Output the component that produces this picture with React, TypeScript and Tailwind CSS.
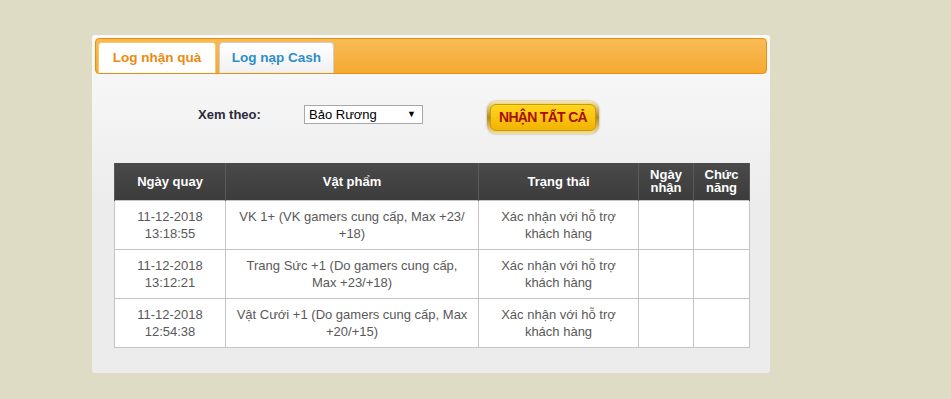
import React from 'react';

interface LogRow {
  date: string;
  time: string;
  item: string;
  status: string;
}

const rows: LogRow[] = [
  {
    date: '11-12-2018',
    time: '13:18:55',
    item: 'VK 1+ (VK gamers cung cấp, Max +23/ +18)',
    status: 'Xác nhận với hỗ trợ khách hàng',
  },
  {
    date: '11-12-2018',
    time: '13:12:21',
    item: 'Trang Sức +1 (Do gamers cung cấp, Max +23/+18)',
    status: 'Xác nhận với hỗ trợ khách hàng',
  },
  {
    date: '11-12-2018',
    time: '12:54:38',
    item: 'Vật Cưới +1 (Do gamers cung cấp, Max +20/+15)',
    status: 'Xác nhận với hỗ trợ khách hàng',
  },
];

const font = { fontFamily: '"Liberation Sans", Arial, sans-serif' };

export default function App() {
  return (
    <div className="min-h-[399px] w-full bg-[#dfdcc5] pt-[35px] pl-[92px]" style={font}>
      <div className="w-[678px] h-[338px] rounded-[3px] bg-gradient-to-b from-[#fafafa] via-[#ececec] to-[#ececec] p-[3px]">
        {/* tab bar */}
        <div className="h-[36px] rounded-[4px] border border-[#e8900c] bg-gradient-to-b from-[#f8bb55] to-[#f5a930] flex items-end pl-[2px] gap-[3px]">
          <div className="w-[118px] h-[31px] rounded-t-[4px] border border-b-0 border-[#fbc872] bg-white flex items-center justify-center text-[13.5px] font-bold text-[#ee8a0e]">
            Log nhận quà
          </div>
          <div className="w-[115px] h-[31px] rounded-t-[4px] border border-b-0 border-[#cfcfcf] bg-gradient-to-b from-white to-[#f0f0f0] flex items-center justify-center text-[13.5px] font-bold text-[#2d8ec8]">
            Log nạp Cash
          </div>
        </div>

        {/* filter row */}
        <div className="flex items-start mt-[27px] pl-[103px] h-[33px]">
          <span className="mt-[4px] text-[13px] font-bold text-[#2b2b3a] w-[68px]">Xem theo:</span>
          <div className="mt-[4px] ml-[38px] w-[119px] h-[19px] border border-[#a8a8a8] bg-white flex items-center justify-between pl-[4px] pr-[6px] text-[13px] text-black">
            <span>Bảo Rương</span>
            <span className="text-[9px]">▼</span>
          </div>
          <button className="ml-[64px] w-[112px] h-[33px] rounded-[9px] p-[3px] bg-gradient-to-b from-[#f6e8a8] via-[#b38a18] to-[#f3e09a] shadow-[0_0_2px_rgba(120,90,0,0.6)]">
            <div className="w-full h-full rounded-[6px] border border-[#c89a10] bg-gradient-to-b from-[#ffd61e] to-[#f2b300] flex items-center justify-center text-[14px] font-bold text-[#a80f0a] tracking-[-0.7px]">
              NHẬN TẤT CẢ
            </div>
          </button>
        </div>

        {/* table */}
        <table className="mt-[29px] ml-[19px] w-[635px] border-collapse table-fixed text-[13px]">
          <colgroup>
            <col className="w-[111px]" />
            <col className="w-[253px]" />
            <col className="w-[160px]" />
            <col className="w-[55px]" />
            <col className="w-[56px]" />
          </colgroup>
          <thead>
            <tr className="h-[37px] bg-gradient-to-b from-[#4a4a4a] to-[#3c3c3c] text-white font-bold text-[13px] leading-[13px]">
              <th className="border-x border-[#5a5a5a] px-1">Ngày quay</th>
              <th className="border-x border-[#5a5a5a] px-1">Vật phẩm</th>
              <th className="border-x border-[#5a5a5a] px-1">Trạng thái</th>
              <th className="border-x border-[#5a5a5a] px-1">Ngày nhận</th>
              <th className="border-x border-[#5a5a5a] px-1">Chức năng</th>
            </tr>
          </thead>
          <tbody className="bg-white text-[#595959] leading-[17px] text-center">
            {rows.map((row, i) => (
              <tr key={i} className="h-[49px]">
                <td className="border border-[#c4c4c4] px-1">
                  {row.date}
                  <br />
                  {row.time}
                </td>
                <td className="border border-[#c4c4c4] px-2">{row.item}</td>
                <td className="border border-[#c4c4c4] px-4">{row.status}</td>
                <td className="border border-[#c4c4c4]"></td>
                <td className="border border-[#c4c4c4]"></td>
              </tr>
            ))}
          </tbody>
        </table>
      </div>
    </div>
  );
}
